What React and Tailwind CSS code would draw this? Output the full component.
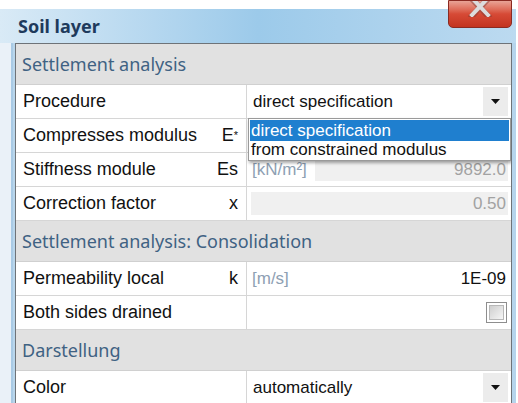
import React from "react";

const labelFont = { fontFamily: '"Liberation Sans", Arial, sans-serif' };
const headFont = { fontFamily: '"Noto Sans", "Open Sans", sans-serif' };

function Arrow() {
  return (
    <svg width="9" height="5" viewBox="0 0 9 5" className="block">
      <path d="M0 0 H9 L4.5 5 Z" fill="#111" />
    </svg>
  );
}

function DropButton() {
  return (
    <div className="w-[25px] self-stretch my-[2px] bg-[#ececec] flex items-center justify-center">
      <Arrow />
    </div>
  );
}

function Header({ children }) {
  return (
    <div className="h-[41px] bg-[#e1e1e1] border-b border-[#d0d0d0] flex items-center pl-[6px]">
      <span className="text-[18px] text-[#3f6283]" style={headFont}>
        {children}
      </span>
    </div>
  );
}

function Row({ label, symbol, children, h = "h-[34px]" }) {
  return (
    <div className={`${h} flex border-b border-[#d6d6d6] bg-white`}>
      <div className="w-[231px] shrink-0 border-r border-[#d6d6d6] flex items-center justify-between pl-[7px] pr-[8px] text-[18px] text-[#111]" style={labelFont}>
        <span>{label}</span>
        <span>{symbol}</span>
      </div>
      <div className="flex-1 flex items-center pl-[4px] pr-[3px] text-[17px] text-[#111]" style={labelFont}>
        {children}
      </div>
    </div>
  );
}

export default function App() {
  return (
    <div className="w-[518px] h-[403px] bg-white overflow-hidden relative">
      <div className="mt-[9px] w-[516px] h-[394px] flex flex-col">
        {/* title bar */}
        <div className="h-[34px] shrink-0 bg-gradient-to-r from-[#d9eaf6] via-[#9ccaea] to-[#bcdaf0] flex items-center pl-[18px]">
          <span className="text-[18px] font-bold text-[#1e3a5c]" style={headFont}>
            Soil layer
          </span>
        </div>
        <div className="flex-1 flex min-h-0">
          <div className="w-[13px] bg-[#eaf1f8] border-r-2 border-[#a9cae5]" />
          <div className="w-[2px] bg-[#b9d6ec]" />
          {/* property grid */}
          <div className="flex-1 border border-[#6e7378] border-b-0 relative overflow-hidden">
            <Header>Settlement analysis</Header>
            <Row label="Procedure">
              <span className="flex-1 pl-[2px]">direct specification</span>
              <DropButton />
            </Row>
            <Row
              label="Compresses modulus"
              symbol={
                <span>
                  E<sup className="text-[11px] relative top-[-2px]">*</sup>
                </span>
              }
            />
            <Row label="Stiffness module" symbol="Es">
              <span className="text-[#8ea0b3] pl-[1px] w-[64px]">[kN/m²]</span>
              <div className="flex-1 h-[22px] bg-[#f0f0f0] flex items-center justify-end pr-[2px] text-[#a2a2a2]">
                9892.0
              </div>
            </Row>
            <Row label="Correction factor" symbol="x">
              <div className="flex-1 h-[23px] bg-[#f0f0f0] flex items-center justify-end pr-[2px] text-[#a2a2a2]">
                0.50
              </div>
            </Row>
            <Header>Settlement analysis: Consolidation</Header>
            <Row label="Permeability local" symbol="k">
              <span className="text-[#8ea0b3] pl-[1px]">[m/s]</span>
              <span className="ml-auto pr-[2px]">1E-09</span>
            </Row>
            <Row label="Both sides drained">
              <div className="ml-auto mr-[1px] w-[21px] h-[21px] border border-[#8e8e8e] p-[2px] bg-white">
                <div className="w-full h-full bg-gradient-to-br from-[#cfcfcf] to-[#f6f6f6] border border-[#b8b8b8]" />
              </div>
            </Row>
            <Header>Darstellung</Header>
            <Row label="Color">
              <span className="flex-1 pl-[2px]">automatically</span>
              <DropButton />
            </Row>

            {/* open list of the Procedure combo */}
            <div className="absolute left-[232px] top-[74px] w-[263px] bg-white border border-[#9a9a9a] shadow-[1px_2px_3px_rgba(0,0,0,0.35)] p-[1px] text-[17px]" style={labelFont}>
              <div className="h-[21px] bg-[#1f7fcf] text-white flex items-center pl-[1px]">
                direct specification
              </div>
              <div className="h-[18px] text-[#111] flex items-center pl-[1px]">
                from constrained modulus
              </div>
            </div>
          </div>
          <div className="w-[4px] bg-[#b5d4ec]" />
        </div>
      </div>

      {/* close button */}
      <div className="absolute left-[448px] top-0 w-[64px] h-[28px] rounded-b-[5px] border border-[#8a2a22] bg-gradient-to-b from-[#e8a396] via-[#d64a36] to-[#c3331f] flex items-start justify-center overflow-hidden">
        <svg width="26" height="20" viewBox="0 0 26 20" className="mt-[-4px]">
          <path d="M5 2 L21 19 M21 2 L5 19" stroke="#7a3a33" strokeWidth="6" strokeLinecap="square" opacity="0.45" />
          <path d="M5 1 L21 18 M21 1 L5 18" stroke="#dcdcdc" strokeWidth="4" strokeLinecap="square" />
        </svg>
      </div>
    </div>
  );
}
